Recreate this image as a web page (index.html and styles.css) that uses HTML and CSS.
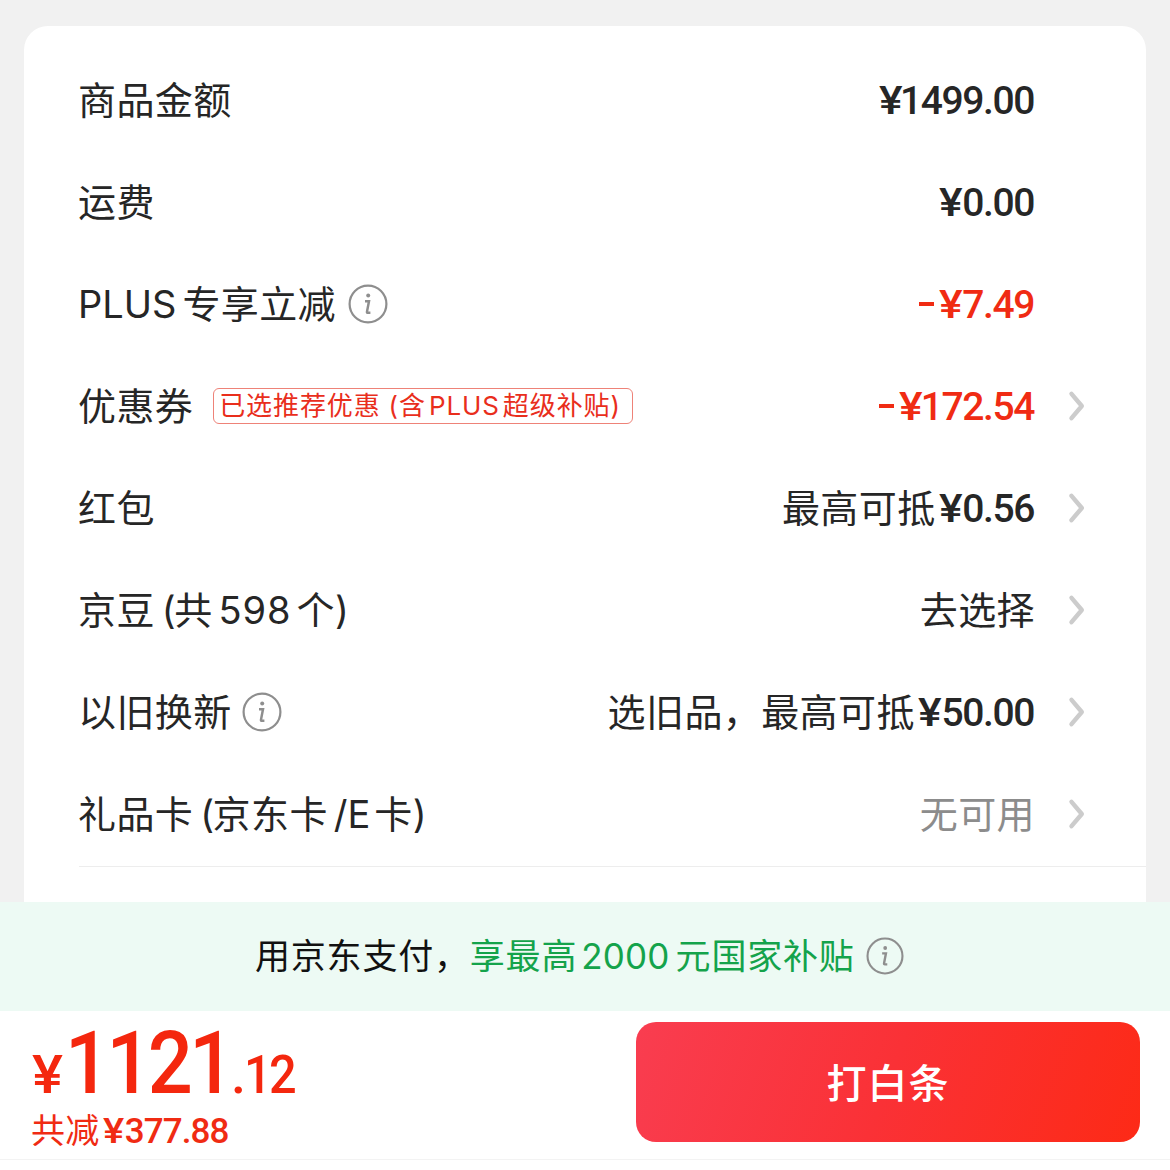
FILE: index.html
```html
<!DOCTYPE html>
<html lang="zh-CN">
<head>
<meta charset="utf-8">
<title>确认订单</title>
<link rel="stylesheet" href="styles.css">
</head>
<body>
<svg class="defs" width="0" height="0">
  <symbol id="info" viewBox="0 0 40 40">
    <circle cx="20" cy="20" r="18.4" fill="none" stroke="currentColor" stroke-width="2.2"/>
    <circle cx="20.2" cy="11.6" r="2" fill="currentColor"/>
    <path d="M17 17.200h4l-2 10.400q-.2 1.200.8 1.200h2.600" fill="none" stroke="currentColor" stroke-width="2.500"/>
  </symbol>
  <symbol id="chevron" viewBox="0 0 20 32">
    <path d="M4.500 3.800L14.800 16 4.500 28.200" fill="none" stroke="currentColor" stroke-width="4.400" stroke-linecap="round" stroke-linejoin="round"/>
  </symbol>
</svg>
<main class="card">
  <div class="row"><div class="label">商品金额</div><div class="value"><span class="num lead-one"><span class="cur">¥</span>1499.00</span></div></div>
  <div class="row"><div class="label">运费</div><div class="value"><span class="num"><span class="cur">¥</span>0.00</span></div></div>
  <div class="row"><div class="label"><span class="latin plus">PLUS</span>专享立减<svg class="info"><use href="#info"/></svg></div><div class="value red"><i class="minus"></i><span class="num"><span class="cur">¥</span>7.49</span></div></div>
  <div class="row"><div class="label">优惠券<span class="tag">已选推荐优惠<span class="tag-open">(</span>含<span class="tag-plus">PLUS</span>超级补贴<span class="tag-close">)</span></span></div><div class="value red"><i class="minus"></i><span class="num lead-one"><span class="cur">¥</span>172.54</span></div><svg class="chevron"><use href="#chevron"/></svg></div>
  <div class="row"><div class="label">红包</div><div class="value">最高可抵<span class="num after"><span class="cur">¥</span>0.56</span></div><svg class="chevron"><use href="#chevron"/></svg></div>
  <div class="row"><div class="label">京豆<span class="open">(</span>共<span class="latin count">598</span>个<span class="close">)</span></div><div class="value">去选择</div><svg class="chevron"><use href="#chevron"/></svg></div>
  <div class="row"><div class="label">以旧换新<svg class="info near"><use href="#info"/></svg></div><div class="value">选旧品，最高可抵<span class="num after"><span class="cur">¥</span>50.00</span></div><svg class="chevron"><use href="#chevron"/></svg></div>
  <div class="row"><div class="label">礼品卡<span class="open">(</span>京东卡<span class="latin ecard">/E</span>卡<span class="close">)</span></div><div class="value muted">无可用</div><svg class="chevron"><use href="#chevron"/></svg></div>
  <div class="divider"></div>
</main>
<div class="promo"><span>用京东支付，</span><span class="green">享最高<span class="amount">2000</span>元国家补贴</span><svg class="info"><use href="#info"/></svg></div>
<footer class="bar">
  <div class="sum">
    <div class="total"><span class="yen">¥</span><span class="big">1121</span><span class="dot">.</span><span class="cents">12</span></div>
    <div class="saved">共减<span class="saved-num"><span class="cur">¥</span>377.88</span></div>
  </div>
  <button class="pay">打白条</button>
</footer>
</body>
</html>
```

FILE: styles.css
```css
* { box-sizing: border-box; }

body {
  margin: 0;
  width: 1170px;
  height: 1170px;
  display: flex;
  flex-direction: column;
  overflow: hidden;
  background: #f1f1f1;
  color: #262626;
  font-family: Inter, "Noto Sans CJK SC", sans-serif;
  text-autospace: no-autospace;
}

.defs { position: absolute; }

.card {
  height: 876px;
  margin: 26px 24px 0;
  padding: 23px 0 0 54px;
  flex: none;
  background: #fff;
  border-radius: 24px 24px 0 0;
}

.row {
  height: 102px;
  display: flex;
  align-items: center;
  padding-right: 59px;
}

.label, .value {
  display: flex;
  align-items: center;
  font-size: 38px;
  line-height: 52px;
  letter-spacing: 0.4px;
  white-space: nowrap;
}

.value { margin-left: auto; margin-right: 52px; }
.chevron { width: 20px; height: 32px; margin-left: -20px; color: #ccc; flex: none; }

.num {
  margin-right: 1px;
  padding-top: 2px;
  font-family: Roboto, sans-serif;
  font-size: 39px;
  font-weight: 500;
  letter-spacing: -1.4px;
}
.cur {
  display: inline-block;
  margin-right: 4.4px;
  transform: scaleX(1.14);
  transform-origin: left;
}
.lead-one { letter-spacing: -1.4px; }
.lead-one .cur { margin-right: 2px; }
.after { margin-left: 3px; }

.red { color: #f02b13; }
.muted { color: #8c8c8c; }
.minus { width: 15px; height: 4px; margin-right: 5px; background: currentColor; }

.info { width: 40px; height: 40px; margin-left: 12px; color: #8e8e8e; flex: none; }
.info.near { margin-left: 10px; }

.latin { letter-spacing: 0; }
.plus { margin-right: 6px; }
.open { margin-left: 7px; letter-spacing: -1.5px; }
.close { letter-spacing: 0; }
.count { margin: 0 5px 0 6px; letter-spacing: 0.9px; }
.ecard { margin: 0 4px 0 6px; }

.tag {
  display: flex;
  align-items: center;
  height: 36px;
  margin-left: 20px;
  padding: 0 11px 0 5px;
  border: 1px solid #ee8278;
  border-radius: 6px;
  color: #e92e1c;
  font-size: 26px;
  line-height: 34px;
  letter-spacing: 0.9px;
}
.tag-open { margin-left: 8px; }
.tag-plus { margin: 0 3px; }

.divider { height: 1px; margin: 1px 0 0 1px; background: #ededed; }

.promo {
  height: 109px;
  flex: none;
  display: flex;
  align-items: center;
  padding: 0 0 1px 255px;
  background: #edfaf4;
  color: #111;
  font-size: 35px;
  line-height: 48px;
  letter-spacing: 0.8px;
  white-space: nowrap;
}
.green { display: flex; color: #14a34b; }
.amount { margin: 0 6px 0 4px; letter-spacing: 0.2px; }
.promo .info { width: 38px; height: 38px; margin-left: 11px; }

.bar {
  height: 149px;
  flex: none;
  display: flex;
  justify-content: space-between;
  padding: 11px 30px 0 31px;
  background: #fff;
  border-bottom: 1px solid #f3f3f3;
  box-shadow: 0 20px 0 #fff;
}

.total {
  display: flex;
  align-items: baseline;
  height: 82px;
  line-height: 82px;
  color: #f4270e;
  font-family: Roboto, sans-serif;
  font-weight: 500;
}
.yen {
  width: 33px;
  margin-left: 1px;
  font-size: 54px;
  transform: scaleX(1.08);
  transform-origin: left;
}
.big, .cents { transform: scaleX(0.9); transform-origin: left; }
.big { margin-right: -18px; font-size: 88px; letter-spacing: -4px; }
.dot, .cents { font-size: 54px; }
.cents { margin-left: -2px; letter-spacing: -3px; }

.saved {
  display: flex;
  align-items: center;
  height: 32px;
  margin-top: 11px;
  color: #f02b13;
  font-size: 34px;
  line-height: 32px;
  letter-spacing: 0.3px;
}
.saved-num {
  margin-left: 3px;
  padding-top: 1px;
  font-family: Roboto, sans-serif;
  font-size: 35px;
  font-weight: 500;
  letter-spacing: -0.9px;
}

.pay {
  width: 504px;
  height: 120px;
  padding-bottom: 4px;
  border: 0;
  border-radius: 20px;
  background: linear-gradient(110deg, #f93d50 0%, #fa3136 50%, #fd2a16 100%);
  color: #fff;
  font: 500 40px "Noto Sans CJK SC", sans-serif;
  letter-spacing: 1px;
}
```
